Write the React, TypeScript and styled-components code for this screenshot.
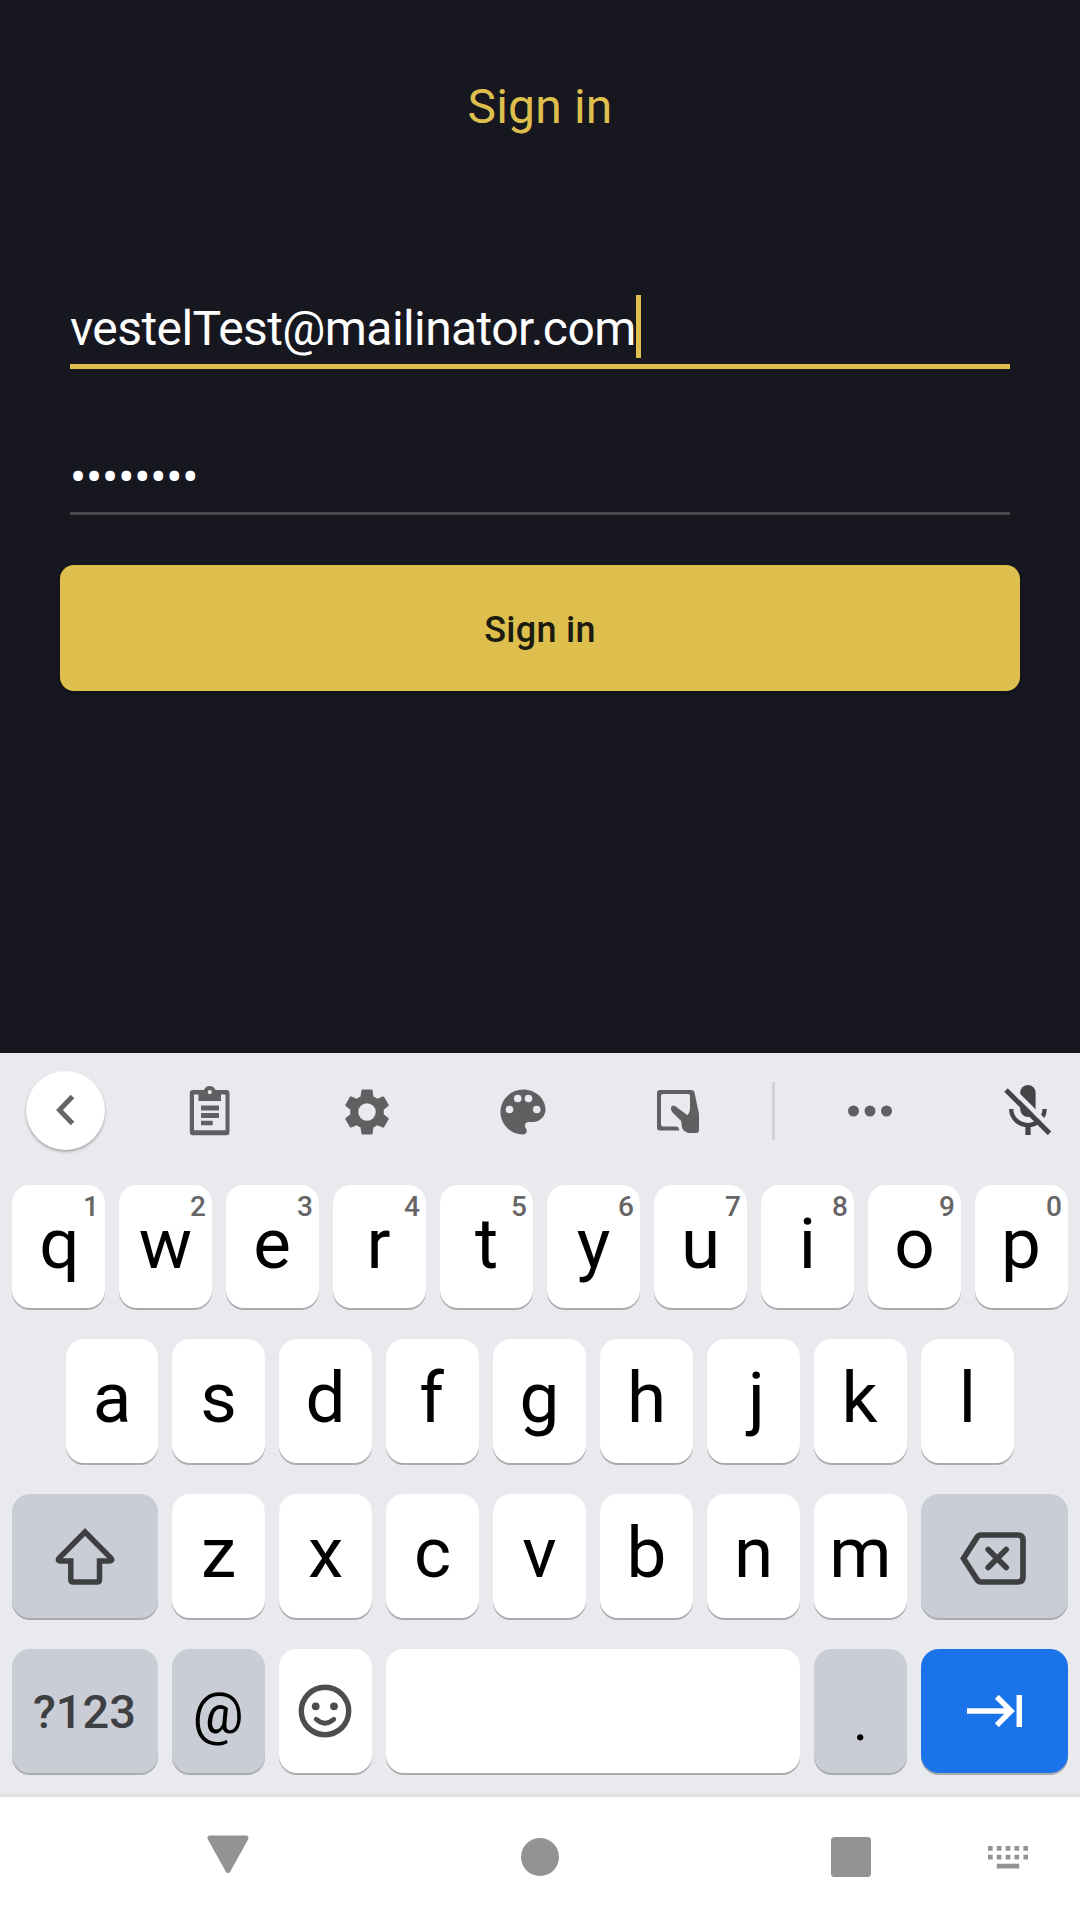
import React from "react";
import styled, { createGlobalStyle } from "styled-components";

const GlobalStyle = createGlobalStyle`
  * { box-sizing: border-box; }
  body { margin: 0; background: #16171f; font-family: Roboto, "Noto Sans", sans-serif; }
  svg { display: block; flex: none; }
`;

const Screen = styled.main`
  width: 1080px;
  height: 1920px;
  display: flex;
  flex-direction: column;
  overflow: hidden;
  background: #16171f;
`;

/* ---------- Sign-in form ---------- */

const Form = styled.section`
  height: 1053px;
  flex: none;
  display: flex;
  flex-direction: column;
  padding: 75px 60px 0;
`;

const Title = styled.h1`
  margin: 0 0 156px;
  font-size: 48px;
  font-weight: 400;
  line-height: 64px;
  letter-spacing: 0.2px;
  text-align: center;
  color: #debf4e;
`;

const Field = styled.div<{ $focused?: boolean }>`
  display: flex;
  align-items: flex-start;
  height: ${(p) => (p.$focused ? 74 : 146)}px;
  padding-top: ${(p) => (p.$focused ? 0 : 75)}px;
  margin: 0 10px;
  border-bottom: ${(p) => (p.$focused ? "5px solid #debf4e" : "3px solid #48484a")};
`;

const FieldText = styled.span<{ $tracking: number }>`
  font-size: 48px;
  line-height: 67px;
  letter-spacing: ${(p) => p.$tracking}px;
  color: #fff;
`;

const Caret = styled.span`
  width: 5px;
  height: 63px;
  background: #debf4e;
`;

const SubmitButton = styled.button`
  height: 126px;
  margin-top: 50px;
  padding: 3px 0 0;
  border: 0;
  border-radius: 14px;
  background: #debf4e;
  box-shadow: 0 2px 4px rgba(0, 0, 0, 0.25);
  font: 500 36px/44px Roboto, sans-serif;
  letter-spacing: 0.3px;
  color: #1c1b10;
`;

/* ---------- Keyboard ---------- */

const Keyboard = styled.section`
  height: 744px;
  flex: none;
  background: #e8eaee;
  border-bottom: 3px solid #dfe1e1;
`;

const Toolbar = styled.div`
  height: 116px;
  display: grid;
  grid-template-columns: 131px 158px 156px 157px 152px 39px 154px 133px;
  align-items: center;
  justify-items: center;
`;

const Tool = styled.div<{ $drop?: number; $left?: number }>`
  margin-top: ${(p) => p.$drop ?? 0}px;
  margin-left: ${(p) => p.$left ?? 0}px;
`;

const BackButton = styled.div`
  width: 79px;
  height: 79px;
  display: flex;
  align-items: center;
  justify-content: center;
  margin-bottom: 2px;
  padding-right: 1px;
  border-radius: 50%;
  background: #fff;
  box-shadow: 0 2px 3px rgba(0, 0, 0, 0.28);
`;

const Divider = styled.div`
  width: 3px;
  height: 58px;
  background: #cfd1d5;
`;

const Keys = styled.div`
  display: grid;
  grid-template-rows: 123px 124px 124px 124px;
  row-gap: 31px;
  padding: 16px 12px 0;
`;

const KeyRow = styled.div<{ $inset?: boolean }>`
  display: flex;
  gap: 14px;
  padding: 0 ${(p) => (p.$inset ? 54 : 0)}px;
`;

type Tone = "light" | "dark" | "action";
const toneColor: Record<Tone, string> = { light: "#fff", dark: "#cacdd6", action: "#1a73e9" };

const Key = styled.div<{ $tone?: Tone; $width?: number }>`
  position: relative;
  width: ${(p) => p.$width ?? 93}px;
  height: 100%;
  flex: none;
  display: flex;
  align-items: center;
  justify-content: center;
  border-radius: 18px;
  background: ${(p) => toneColor[p.$tone ?? "light"]};
  box-shadow: 0 2px 0 #a9abae;
  color: #000;
`;

const Letter = styled.span<{ $size?: number; $drop?: number; $nudge?: number }>`
  font-size: ${(p) => p.$size ?? 71}px;
  line-height: 80px;
  margin-top: ${(p) => p.$drop ?? -6}px;
  margin-left: ${(p) => 2 * (p.$nudge ?? 0)}px;
`;

const ModeLabel = styled.span`
  margin: 1px 1px 0 0;
  font-size: 47px;
  font-weight: 500;
  line-height: 60px;
  color: #3e3f42;
`;

const Hint = styled.span`
  position: absolute;
  top: 6px;
  right: 6px;
  font-size: 28px;
  font-weight: 500;
  line-height: 32px;
  color: #666;
`;

const IconSlot = styled.div<{ $right?: number; $top?: number }>`
  padding-right: ${(p) => p.$right ?? 0}px;
  padding-top: ${(p) => p.$top ?? 0}px;
`;

/* ---------- System navigation ---------- */

const NavBar = styled.nav`
  height: 123px;
  flex: none;
  display: flex;
  align-items: flex-start;
  background: #fff;
  padding-left: 207px;
`;

const NavItem = styled.div<{ $top: number; $gap?: number }>`
  margin-top: ${(p) => p.$top}px;
  margin-left: ${(p) => p.$gap ?? 0}px;
`;

const GRAY = "#5f6062";
const INK = "#3e3f41";

const ChevronIcon = () => (
  <svg width="20" height="32" viewBox="0 0 20 32" fill="none" stroke="#666" strokeWidth="5">
    <path d="M17.5 2.5 4.5 16l13 13.5" />
  </svg>
);

const ClipboardIcon = () => (
  <svg width="42" height="51" viewBox="0 0 42 51">
    <path
      fill={GRAY}
      fillRule="evenodd"
      d="M4 5H15A6.2 6.2 0 0 1 26.5 5H37.300q3.200 0 3.200 3.200V47q0 3.200-3.200 3.200H4Q.8 50.200.8 47V8.200Q.8 5 4 5ZM5 9.500V45.300H36.500V9.500H32V16H9.500V9.500ZM20.800 5A2.100 2.100 0 1 0 20.800 9.200 2.100 2.100 0 1 0 20.800 5Z"
    />
    <path fill={GRAY} d="M12 20.500h18v5H12zM12 28h18v5H12zM12 35.700h11.700v4.600H12z" />
  </svg>
);

const GearIcon = () => (
  <svg width="56" height="56" viewBox="0 0 24 24">
    <path
      fill={GRAY}
      fillRule="evenodd"
      d="M19.140 12.940c.04-.3.06-.61.06-.94 0-.32-.02-.64-.07-.94l2.030-1.580c.18-.14.23-.41.12-.61l-1.920-3.320c-.12-.22-.37-.29-.59-.22l-2.390.96c-.5-.38-1.030-.7-1.620-.94L14.400 2.810c-.04-.24-.24-.41-.48-.41h-3.840c-.24 0-.43.17-.47.41L9.250 5.350C8.660 5.590 8.120 5.920 7.630 6.290L5.240 5.330c-.22-.08-.47 0-.59.22L2.740 8.870c-.12.21-.08.47.12.61l2.030 1.580C4.840 11.360 4.800 11.690 4.800 12s.02.64.07.94l-2.030 1.580c-.18.14-.23.41-.12.61l1.920 3.320c.12.22.37.29.59.22l2.390-.96c.5.38 1.030.7 1.620.94l.36 2.540c.05.24.24.41.48.41h3.840c.24 0 .44-.17.47-.41l.36-2.540c.59-.24 1.130-.56 1.620-.94l2.390.96c.22.08.47 0 .59-.22l1.920-3.320c.12-.22.07-.47-.12-.61zM12 8.240A3.760 3.760 0 1 0 12 15.760 3.760 3.760 0 1 0 12 8.240Z"
    />
  </svg>
);

const PaletteIcon = () => (
  <svg width="60" height="60" viewBox="0 0 24 24">
    <path
      fill={GRAY}
      d="M12 3c-4.970 0-9 4.030-9 9s4.030 9 9 9c.83 0 1.500-.67 1.500-1.500 0-.39-.15-.74-.39-1.010-.23-.26-.38-.61-.38-.99 0-.83.67-1.500 1.500-1.500H16c2.760 0 5-2.240 5-5 0-4.420-4.030-8-9-8z"
    />
    <g fill="#e8eaee">
      <circle cx="6.600" cy="11" r="1.520" />
      <circle cx="9.900" cy="6.600" r="1.520" />
      <circle cx="14.200" cy="6.600" r="1.520" />
      <circle cx="17.500" cy="11" r="1.520" />
    </g>
  </svg>
);

const HandwritingIcon = () => (
  <svg width="42" height="43" viewBox="0 0 42 43">
    <path
      fill={GRAY}
      d="M3 0H34Q37 0 37.500 2.500L42 24V40Q42 43 39 43H31Q27 42 25.300 38.500Q24.600 36 24.200 31L15.500 22.500Q13.500 20.500 14 17Q15.500 14.500 18 16L30.500 25.200Q33 22 33 19V6Q33 4 31 4H6Q4 4 4 6V34.500Q4 36.500 6 36.500H19.500Q22 37 22.300 40.500H3Q0 40.500 0 37.500V3Q0 0 3 0Z"
    />
  </svg>
);

const MoreIcon = () => (
  <svg width="44" height="12" viewBox="0 0 44 12" fill={GRAY}>
    <circle cx="5.500" cy="6" r="5.500" />
    <circle cx="22" cy="6" r="5.500" />
    <circle cx="38.500" cy="6" r="5.500" />
  </svg>
);

const MicOffIcon = () => (
  <svg width="48" height="50" viewBox="0 0 48 50" fill="none">
    <rect x="16.200" y="0" width="15.400" height="32" rx="7.700" fill="#444547" />
    <path d="M7.200 24a16.700 16.100 0 0 0 33.400 0" stroke="#444547" strokeWidth="4.300" />
    <path d="M24 39v11" stroke="#444547" strokeWidth="5.300" />
    <path d="M4 0 46 42" stroke="#e8eaee" strokeWidth="4.600" />
    <path d="M2 5 45.500 48.300" stroke="#444547" strokeWidth="5" />
  </svg>
);

const ShiftIcon = () => (
  <svg width="60" height="57" viewBox="0 0 60 57" fill="none" stroke={INK} strokeWidth="5.500">
    <path d="M30 4 3.900 30.300Q2.400 33 5.400 33H15.800V51.500Q15.800 54 18.300 54H42Q44.500 54 44.500 51.500V33H54.800Q57.700 33 56.200 30.300Z" />
  </svg>
);

const BackspaceIcon = () => (
  <svg width="66" height="53" viewBox="0 0 66 53" fill="none" stroke={INK} strokeWidth="5.700">
    <path d="M21 3H58Q63 3 63 8V45Q63 50 58 50H21Q18.500 50 17 47.600L3.500 26.500 17 5.400Q18.500 3 21 3Z" />
    <path d="M28.200 17.500l18 18m0-18l-18 18" strokeLinecap="round" />
  </svg>
);

const SmileIcon = () => (
  <svg width="54" height="54" viewBox="0 0 54 54" fill="none" stroke="#4c4d4e">
    <circle cx="27" cy="27" r="23.700" strokeWidth="5.400" />
    <circle cx="17.700" cy="22.300" r="3.900" fill="#4c4d4e" stroke="none" />
    <circle cx="36" cy="22.300" r="3.900" fill="#4c4d4e" stroke="none" />
    <path d="M18.200 35.300Q27 43 35.800 35.300" strokeWidth="4.800" strokeLinecap="round" />
  </svg>
);

const NextIcon = () => (
  <svg width="55" height="32" viewBox="0 0 55 32" fill="none" stroke="#fff" strokeWidth="5.500">
    <path d="M0 16H44M29.800 1.800 44 16 29.800 30.200M52.300 0V32" />
  </svg>
);

const KeyboardIcon = () => (
  <svg width="40" height="23" viewBox="0 0 40 23" fill="#939393">
    {[0, 8.8, 17.7, 26.5, 35.4].map((x) => (
      <React.Fragment key={x}>
        <rect x={x} y="0" width="4.600" height="4.700" />
        <rect x={x} y="8.800" width="4.600" height="4.700" />
      </React.Fragment>
    ))}
    <rect x="8.800" y="17.700" width="22.400" height="4.800" />
  </svg>
);

const nudges: Record<string, number> = { q: 1, r: -1, e: -0.5, f: -1, j: 3, k: -1, p: -0.5 };

const LetterKeys = ({ letters, hints, firstWidth }: { letters: string; hints?: string; firstWidth?: number }) => (
  <>
    {letters.split("").map((letter, i) => (
      <Key key={letter} $width={i === 0 ? firstWidth : undefined}>
        {hints && <Hint>{hints[i]}</Hint>}
        <Letter $nudge={nudges[letter]} $drop={hints ? -5 : -6}>{letter}</Letter>
      </Key>
    ))}
  </>
);

export default function App() {
  return (
    <Screen>
      <GlobalStyle />
      <Form>
        <Title>Sign in</Title>
        <Field $focused>
          <FieldText $tracking={-0.59}>vestelTest@mailinator.com</FieldText>
          <Caret />
        </Field>
        <Field>
          <FieldText $tracking={-0.15}>••••••••</FieldText>
        </Field>
        <SubmitButton>Sign in</SubmitButton>
      </Form>
      <Keyboard>
        <Toolbar>
          <BackButton>
            <ChevronIcon />
          </BackButton>
          <Tool $drop={-1}><ClipboardIcon /></Tool>
          <Tool $drop={2}><GearIcon /></Tool>
          <Tool $drop={2} $left={-1}><PaletteIcon /></Tool>
          <Tool $drop={1}><HandwritingIcon /></Tool>
          <Divider />
          <Tool><MoreIcon /></Tool>
          <Tool $left={28} $drop={-2}><MicOffIcon /></Tool>
        </Toolbar>
        <Keys>
          <KeyRow>
            <LetterKeys letters="qwertyuiop" hints="1234567890" />
          </KeyRow>
          <KeyRow $inset>
            <LetterKeys letters="asdfghjkl" firstWidth={92} />
          </KeyRow>
          <KeyRow>
            <Key $tone="dark" $width={146}>
              <ShiftIcon />
            </Key>
            <LetterKeys letters="zxcvbnm" />
            <Key $tone="dark" $width={147}>
              <IconSlot $right={3} $top={4}>
                <BackspaceIcon />
              </IconSlot>
            </Key>
          </KeyRow>
          <KeyRow>
            <Key $tone="dark" $width={146}>
              <ModeLabel>?123</ModeLabel>
            </Key>
            <Key $tone="dark">
              <Letter $size={57} $drop={5} $nudge={-0.5}>@</Letter>
            </Key>
            <Key>
              <IconSlot $right={1}>
                <SmileIcon />
              </IconSlot>
            </Key>
            <Key $width={414} />
            <Key $tone="dark">
              <Letter $size={57} $drop={20}>.</Letter>
            </Key>
            <Key $tone="action" $width={147}>
              <NextIcon />
            </Key>
          </KeyRow>
        </Keys>
      </Keyboard>
      <NavBar>
        <NavItem $top={38}>
          <svg width="42" height="39" viewBox="0 0 42 39">
            <path d="M3 3H39L21 35.500Z" fill="#939393" stroke="#939393" strokeWidth="5" strokeLinejoin="round" />
          </svg>
        </NavItem>
        <NavItem $top={41} $gap={272}>
          <svg width="38" height="38" viewBox="0 0 38 38">
            <circle cx="19" cy="19" r="19" fill="#939393" />
          </svg>
        </NavItem>
        <NavItem $top={40} $gap={272}>
          <svg width="40" height="40" viewBox="0 0 40 40">
            <rect width="40" height="40" rx="3.500" fill="#939393" />
          </svg>
        </NavItem>
        <NavItem $top={49} $gap={117}>
          <KeyboardIcon />
        </NavItem>
      </NavBar>
    </Screen>
  );
}
